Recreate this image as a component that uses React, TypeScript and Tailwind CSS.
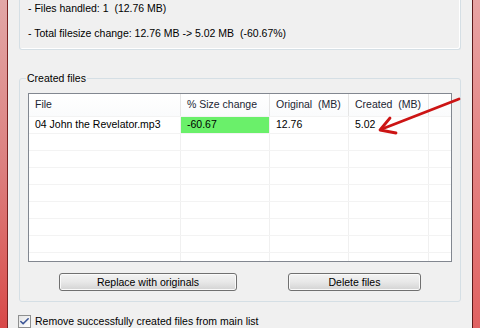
import { Check } from "lucide-react";

const cols = [152, 89, 79, 80];

const rows = [
  ["04 John the Revelator.mp3", "-60.67", "12.76", "5.02"],
  ["", "", "", ""],
  ["", "", "", ""],
  ["", "", "", ""],
  ["", "", "", ""],
  ["", "", "", ""],
  ["", "", "", ""],
  ["", "", "", ""],
  ["", "", "", ""],
];

function Button({ label, width }: { label: string; width: string }) {
  return (
    <button
      className={`${width} h-[18px] rounded-[3px] border border-[#707070] bg-gradient-to-b from-[#f3f3f3] via-[#e8e8e8] to-[#d3d3d3] shadow-[inset_0_0_0_1px_#fafafa] text-black leading-none`}
    >
      {label}
    </button>
  );
}

export default function App() {
  return (
    <div className="relative w-[480px] h-[328px] overflow-hidden flex font-['Liberation_Sans',Arial,sans-serif] text-[10.5px] text-black">
      {/* left window frame */}
      <div className="w-[8px] h-full bg-gradient-to-b from-[#e2a6a6] via-[#dc8080] to-[#d84848] border-r border-[#7a2222]" />

      <div className="flex-1 h-full bg-[#f0f0f0] px-[11px] flex flex-col">
        {/* summary group */}
        <div className="h-[53px] border border-t-0 border-[#d5dfe5] rounded-b-[3px] shadow-[inset_-1px_-1px_0_#ffffff] pl-[8px] flex flex-col gap-[9px]">
          <div className="leading-[16px] whitespace-pre">- Files handled: 1  (12.76 MB)</div>
          <div className="leading-[16px] whitespace-pre">- Total filesize change: 12.76 MB -&gt; 5.02 MB  (-60.67%)</div>
        </div>

        {/* created files group */}
        <fieldset className="mt-[21px] border border-[#d5dfe5] rounded-[3px] px-[8px] pb-[10px]">
          <legend className="-ml-[2px] px-[1px] leading-[15px]">Created files</legend>

          <div className="mt-[7px] h-[169px] border border-[#828790] bg-white overflow-hidden">
            <div className="flex h-[23px] bg-gradient-to-b from-white to-[#fafbfc] border-b border-[#f3f3f3] text-[#1b2533]">
              {["File", "% Size change", "Original  (MB)", "Created  (MB)"].map((h, i) => (
                <div
                  key={h}
                  style={{ width: cols[i] }}
                  className="shrink-0 border-r border-[#e5e5e5] pl-[6px] flex items-center whitespace-pre"
                >
                  {h}
                </div>
              ))}
              <div className="flex-1" />
            </div>
            {rows.map((r, ri) => (
              <div key={ri} className="flex h-[17px] border-b border-[#f3f3f3]">
                {r.map((c, ci) => (
                  <div
                    key={ci}
                    style={{ width: cols[ci] }}
                    className={`shrink-0 border-r border-[#f0f0f0] pl-[6px] flex items-center ${
                      ri === 0 && ci === 1 ? "bg-[#6af06a]" : ""
                    }`}
                  >
                    {c}
                  </div>
                ))}
                <div className="flex-1" />
              </div>
            ))}
          </div>

          <div className="mt-[11px] flex justify-center gap-[51px]">
            <Button label="Replace with originals" width="w-[178px]" />
            <Button label="Delete files" width="w-[133px]" />
          </div>
        </fieldset>

        <div className="mt-[13px] flex items-center gap-[4px] -ml-[1px]">
          <div className="w-[13px] h-[13px] border border-[#8e8f8f] bg-gradient-to-br from-[#e4e4e4] to-white flex items-center justify-center">
            <Check className="w-[11px] h-[11px] text-[#3c5596]" strokeWidth={3.5} />
          </div>
          <span className="leading-[13px]">Remove successfully created files from main list</span>
        </div>
      </div>

      {/* right window frame */}
      <div className="w-[8px] h-full bg-gradient-to-b from-[#e8a4a4] via-[#e38282] to-[#e06262] border-l border-[#5e1a1a]" />

      {/* red annotation arrow */}
      <svg className="absolute left-0 top-0" width="480" height="328" viewBox="0 0 480 328">
        <g stroke="#cc1414" strokeWidth="2.8" strokeLinecap="round" strokeLinejoin="round" fill="none">
          <line x1="459" y1="99" x2="382" y2="129" />
          <polyline points="390,118 380,130 396,133" />
        </g>
      </svg>
    </div>
  );
}
